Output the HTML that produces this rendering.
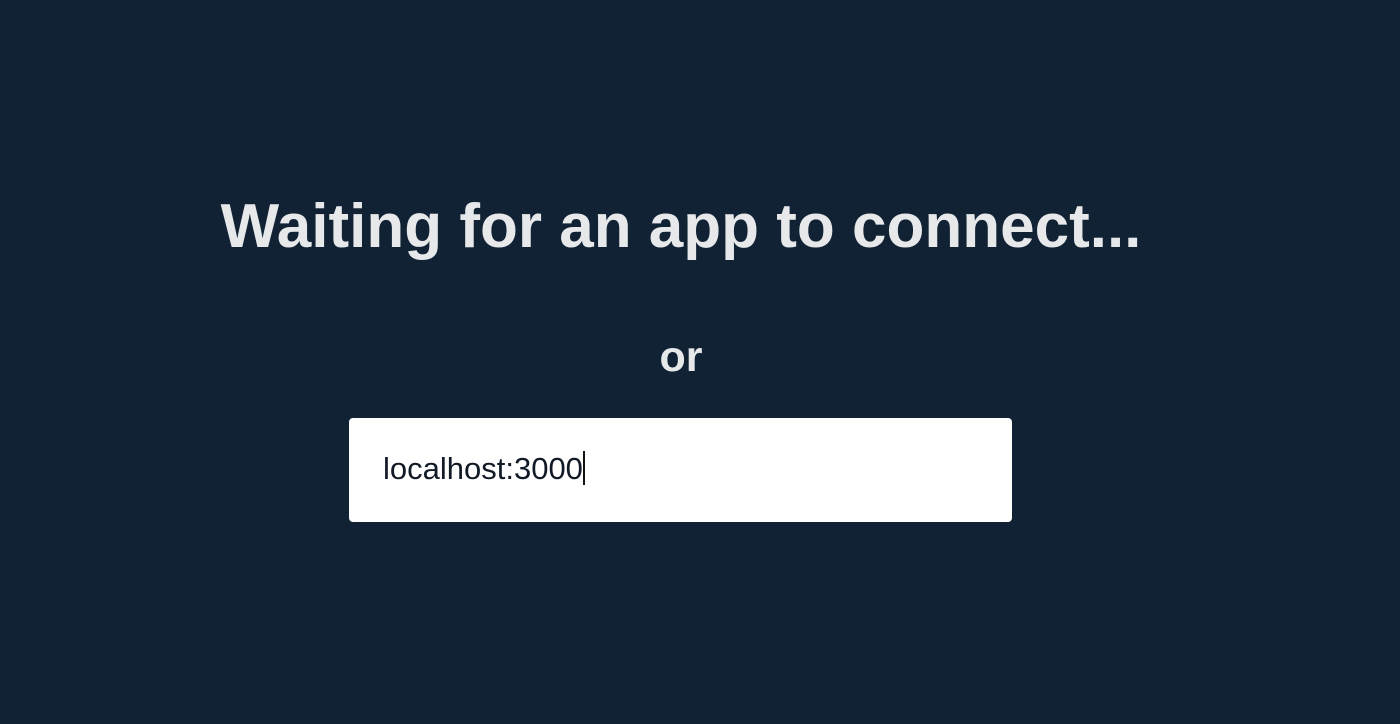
<!DOCTYPE html>
<html><head><style>
html,body{margin:0;padding:0;width:1400px;height:724px;background:#112234;overflow:hidden;font-family:"Liberation Sans",sans-serif}
h1{position:absolute;left:0;width:1362px;text-align:center;top:191px;margin:0;font-size:62px;font-weight:bold;color:#e6e8ea}
.or{position:absolute;left:0;width:1362px;text-align:center;top:333px;font-size:43px;font-weight:bold;color:#e6e8ea}
.box{position:absolute;left:349px;top:418px;width:663px;height:104px;background:#fff;border-radius:4px}
.t{position:absolute;left:34px;top:33px;font-size:31px;color:#111a26}
.cur{display:inline-block;width:2px;height:34px;background:#111;vertical-align:-6px}
</style></head><body>
<h1>Waiting for an app to connect...</h1>
<div class="or">or</div>
<div class="box"><div class="t">localhost:3000<span class="cur"></span></div></div>
</body></html>
